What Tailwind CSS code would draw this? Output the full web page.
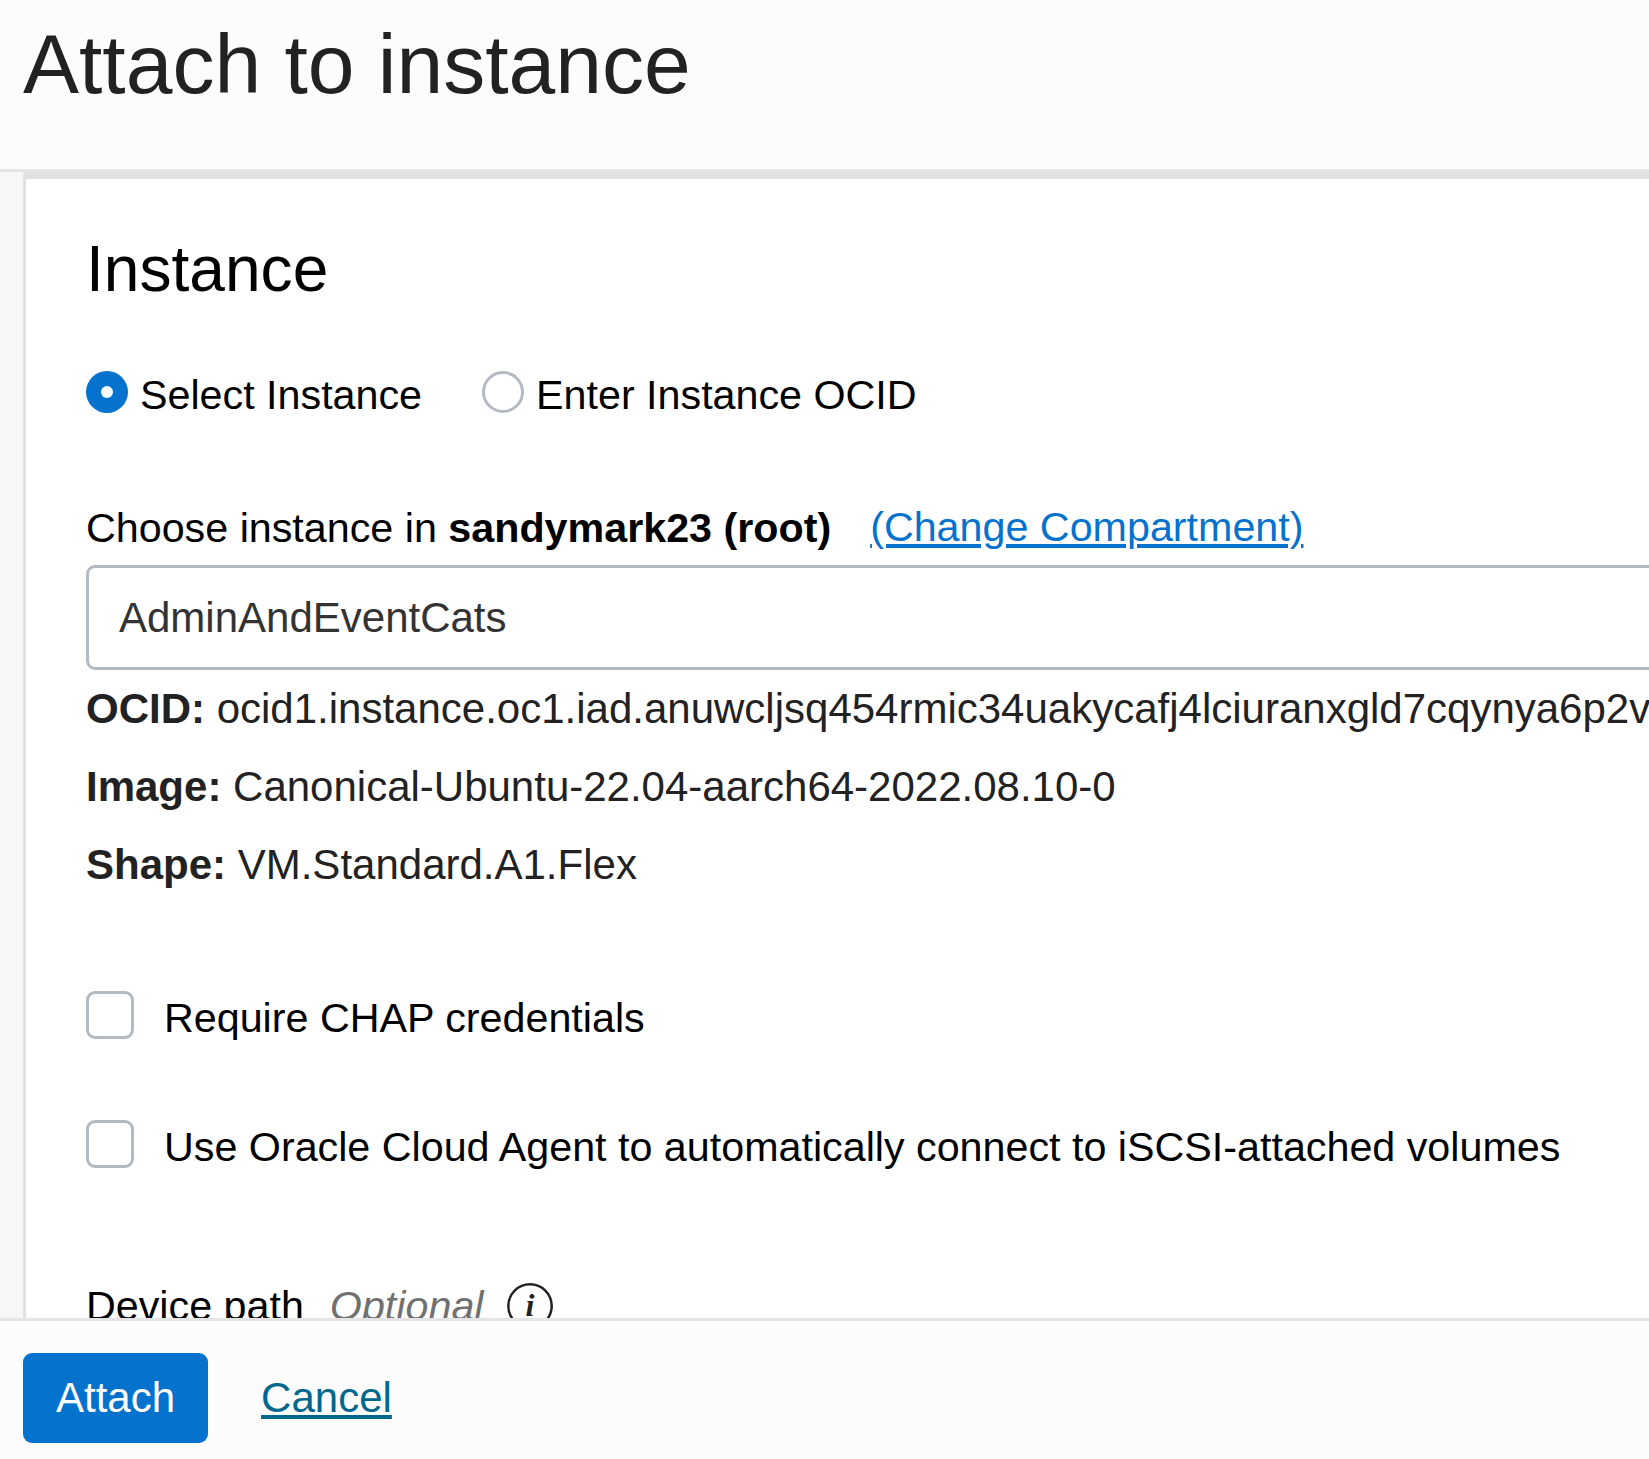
<!DOCTYPE html>
<html lang="en">
<head>
<meta charset="utf-8">
<title>Attach to instance</title>
<script src="https://cdn.jsdelivr.net/npm/@tailwindcss/browser@4"></script>
</head>
<body class="flex h-[1459px] w-[1649px] flex-col overflow-hidden bg-[#f7f7f7] font-['Liberation_Sans',Arial,sans-serif] text-[42px] text-black">
  <header class="h-[172px] shrink-0 border-b-3 border-[#e5e5e5] bg-[#fcfcfc] pt-4 pl-[23px]">
    <h1 class="text-[84px] leading-[96px] text-[#222]">Attach to instance</h1>
  </header>

  <main class="min-h-0 flex-1 overflow-hidden pl-[23px]">
    <section class="w-[1800px] rounded-tl-[4px] border-t-7 border-l-3 border-[#e0e1e5] bg-white pt-[54px] pb-20 pl-[60px] text-[41.25px]">
      <h2 class="text-[64.1px] leading-[72px]">Instance</h2>

      <div class="mt-[60px] flex h-[60px] gap-[60px] leading-[60px]">
        <label class="flex gap-3">
          <span class="mt-[6px] flex size-[42px] items-center justify-center rounded-full bg-[#0572ce]"><span class="size-3 rounded-full bg-white"></span></span>
          <span>Select Instance</span>
        </label>
        <label class="flex gap-3">
          <span class="mt-[6px] size-[42px] rounded-full border-3 border-[#b3bac2] bg-white"></span>
          <span>Enter Instance OCID</span>
        </label>
      </div>

      <div class="mt-[76px] flex gap-[39px] leading-[54px]">
        <p>Choose instance in <b>sandymark23 (root)</b></p>
        <a class="-mt-px text-[#0572ce] underline decoration-4 underline-offset-[3px]">(Change Compartment)</a>
      </div>
      <div class="mt-[10px] flex h-[105px] items-center rounded-[9px] border-3 border-[#b3bac2] bg-white pl-[30px] text-[42px] text-[#333]">AdminAndEventCats</div>
      <div class="text-[42px] leading-[78px] whitespace-nowrap text-[#222]">
        <p><b>OCID:</b> ocid1.instance.oc1.iad.anuwcljsq454rmic34uakycafj4lciuranxgld7cqynya6p2v</p>
        <p><b>Image:</b> Canonical-Ubuntu-22.04-aarch64-2022.08.10-0</p>
        <p><b>Shape:</b> VM.Standard.A1.Flex</p>
      </div>

      <label class="mt-[84px] flex gap-[30px] leading-[60px]">
        <span class="mt-[3px] size-12 rounded-[9px] border-3 border-[#b3bac2] bg-white"></span>
        <span>Require CHAP credentials</span>
      </label>
      <label class="mt-[69px] flex gap-[30px] leading-[60px]">
        <span class="mt-[3px] size-12 rounded-[9px] border-3 border-[#b3bac2] bg-white"></span>
        <span>Use Oracle Cloud Agent to automatically connect to iSCSI-attached volumes</span>
      </label>

      <div class="mt-[99px] flex leading-[60px]">
        <span>Device path</span>
        <i class="ml-[26px] text-[#707070]">Optional</i>
        <svg class="mt-[7px] ml-[24px] size-[46px]" viewBox="0 0 46 46">
          <circle cx="23" cy="23" r="21.7" fill="#fff" stroke="#222" stroke-width="2.5"/>
          <text x="23" y="33" text-anchor="middle" fill="#222" font-family="Liberation Serif, serif" font-size="32" font-style="italic" font-weight="700">i</text>
        </svg>
      </div>
    </section>
  </main>

  <footer class="flex h-[141px] shrink-0 items-start gap-[53px] border-t-3 border-[#e5e5e5] bg-[#fcfcfc] pt-8 pl-[23px] leading-[90px]">
    <button class="h-[90px] rounded-[9px] bg-[#0572ce] px-[33px] text-white">Attach</button>
    <a class="text-[#00688c] underline decoration-4 underline-offset-[3px]">Cancel</a>
  </footer>
</body>
</html>
